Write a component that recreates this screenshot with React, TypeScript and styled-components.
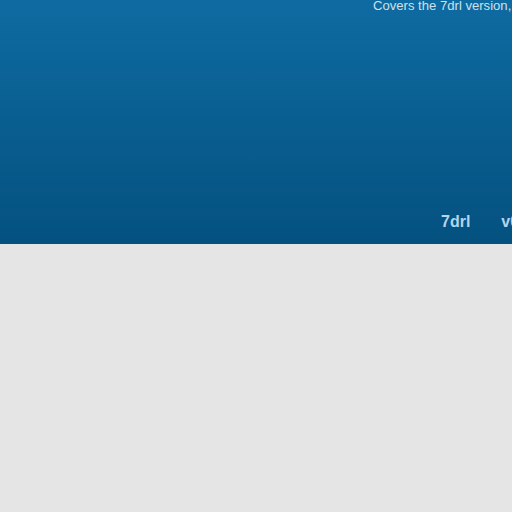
import React from "react";
import styled, { createGlobalStyle } from "styled-components";

const Global = createGlobalStyle`
  html, body { margin: 0; padding: 0; background: #e5e5e5; overflow: hidden; }
  body { font-family: "Liberation Sans", Arial, sans-serif; }
`;

const Header = styled.header`
  height: 244px;
  background: linear-gradient(to bottom, #0e6ba1 0%, #04517f 100%);
  display: flex;
  flex-direction: column;
  justify-content: space-between;
  overflow: hidden;
`;

const Tagline = styled.div`
  padding-left: 373px;
  margin-top: -2px;
  font-size: 13.1px;
  line-height: 15px;
  color: #cde0ee;
  white-space: nowrap;
`;

const Nav = styled.nav`
  display: flex;
  gap: 31px;
  padding-left: 441px;
  padding-bottom: 13px;
  white-space: nowrap;
`;

const Tab = styled.a`
  font-size: 16px;
  font-weight: bold;
  color: #b4d5ea;
  text-decoration: none;
`;

const Body = styled.main`
  height: 268px;
  background: #e5e5e5;
`;

export default function App() {
  return (
    <>
      <Global />
      <Header>
        <Tagline>Covers the 7drl version, and later updates.</Tagline>
        <Nav>
          <Tab href="#">7drl</Tab>
          <Tab href="#">v0.2</Tab>
        </Nav>
      </Header>
      <Body />
    </>
  );
}
